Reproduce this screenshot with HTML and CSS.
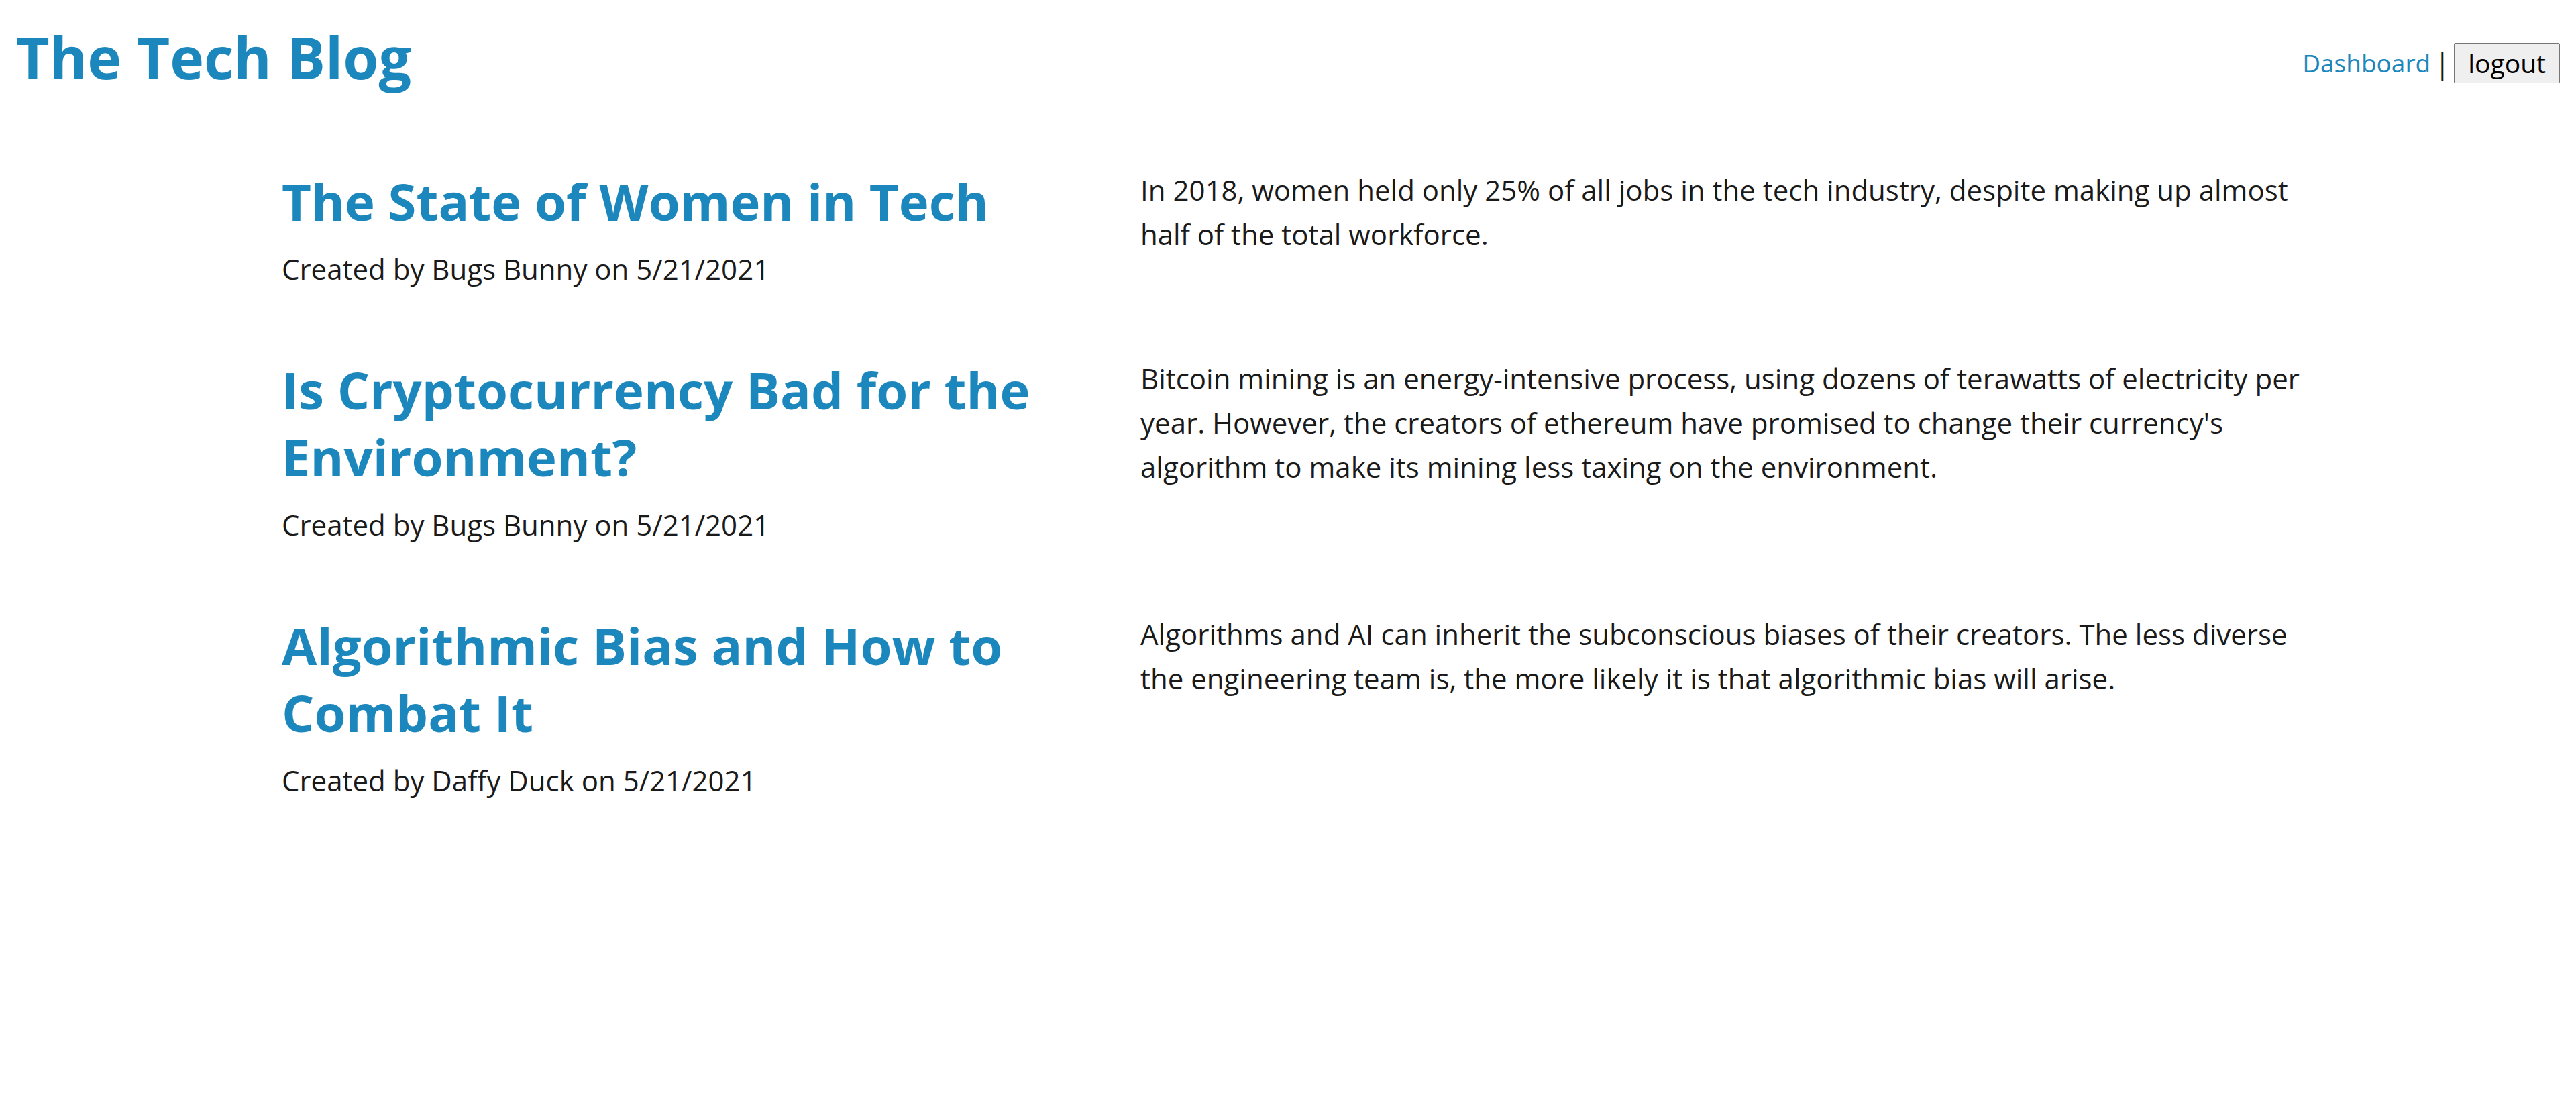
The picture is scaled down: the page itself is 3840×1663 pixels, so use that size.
FILE: index.html
```
<!DOCTYPE html>
<html lang="en">
<head>
<meta charset="utf-8">
<title>The Tech Blog</title>
<link rel="stylesheet" href="styles.css">
</head>
<body>
<header class="site-header">
<h1 class="site-title"><a href="#">The Tech Blog</a></h1>
<nav class="site-nav"><a href="#">Dashboard</a><span class="divider">|</span><button type="button" class="logout">logout</button></nav>
</header>
<main class="posts">
<article class="post">
<div class="post-head"><h2 class="post-title"><a href="#">The State of Women in Tech</a></h2><p class="byline">Created by Bugs Bunny on 5/21/2021</p></div>
<p class="post-body">In 2018, women held only 25% of all jobs in the tech industry, despite making up almost half of the total workforce.</p>
</article>
<article class="post">
<div class="post-head"><h2 class="post-title"><a href="#">Is Cryptocurrency Bad for the Environment?</a></h2><p class="byline">Created by Bugs Bunny on 5/21/2021</p></div>
<p class="post-body">Bitcoin mining is an energy-intensive process, using dozens of terawatts of electricity per year. However, the creators of ethereum have promised to change their currency's algorithm to make its mining less taxing on the environment.</p>
</article>
<article class="post">
<div class="post-head"><h2 class="post-title"><a href="#">Algorithmic Bias and How to Combat It</a></h2><p class="byline">Created by Daffy Duck on 5/21/2021</p></div>
<p class="post-body">Algorithms and AI can inherit the subconscious biases of their creators. The less diverse the engineering team is, the more likely it is that algorithmic bias will arise.</p>
</article>
</main>
</body>
</html>
```

FILE: styles.css
```
* {
  box-sizing: border-box;
}

body {
  margin: 0;
  background: #fff;
  color: #1a1a1a;
  font-family: "Segoe UI", "Open Sans", "Noto Sans", sans-serif;
  font-size: 42px;
  line-height: 66px;
}

h1, h2, p {
  margin: 0;
}

a {
  color: #1c87bc;
  text-decoration: none;
}

.site-header {
  display: flex;
  justify-content: space-between;
  align-items: flex-end;
  padding: 46px 24px 28px;
}

.site-title {
  font-size: 86px;
  line-height: 78px;
}

.site-nav {
  display: flex;
  align-items: center;
  gap: 6px;
  font-size: 37px;
  line-height: 60px;
}

.divider {
  font-size: 42px;
}

.logout {
  padding: 0 20px;
  border: 1px solid #767676;
  border-radius: 2px;
  background: #efefef;
  color: #000;
  font: inherit;
  font-size: 39px;
  line-height: 58px;
}

.posts {
  display: grid;
  gap: 97px;
  width: 80%;
  margin: 0 auto;
  padding: 98px 0;
}

.post {
  display: grid;
  grid-template-columns: 5fr 7fr;
}

.post-head {
  padding: 0 36px;
}

.post-body {
  padding: 0 20px 0 36px;
}

.post-title {
  margin-bottom: 18px;
  font-size: 76px;
  line-height: 100px;
}
```
